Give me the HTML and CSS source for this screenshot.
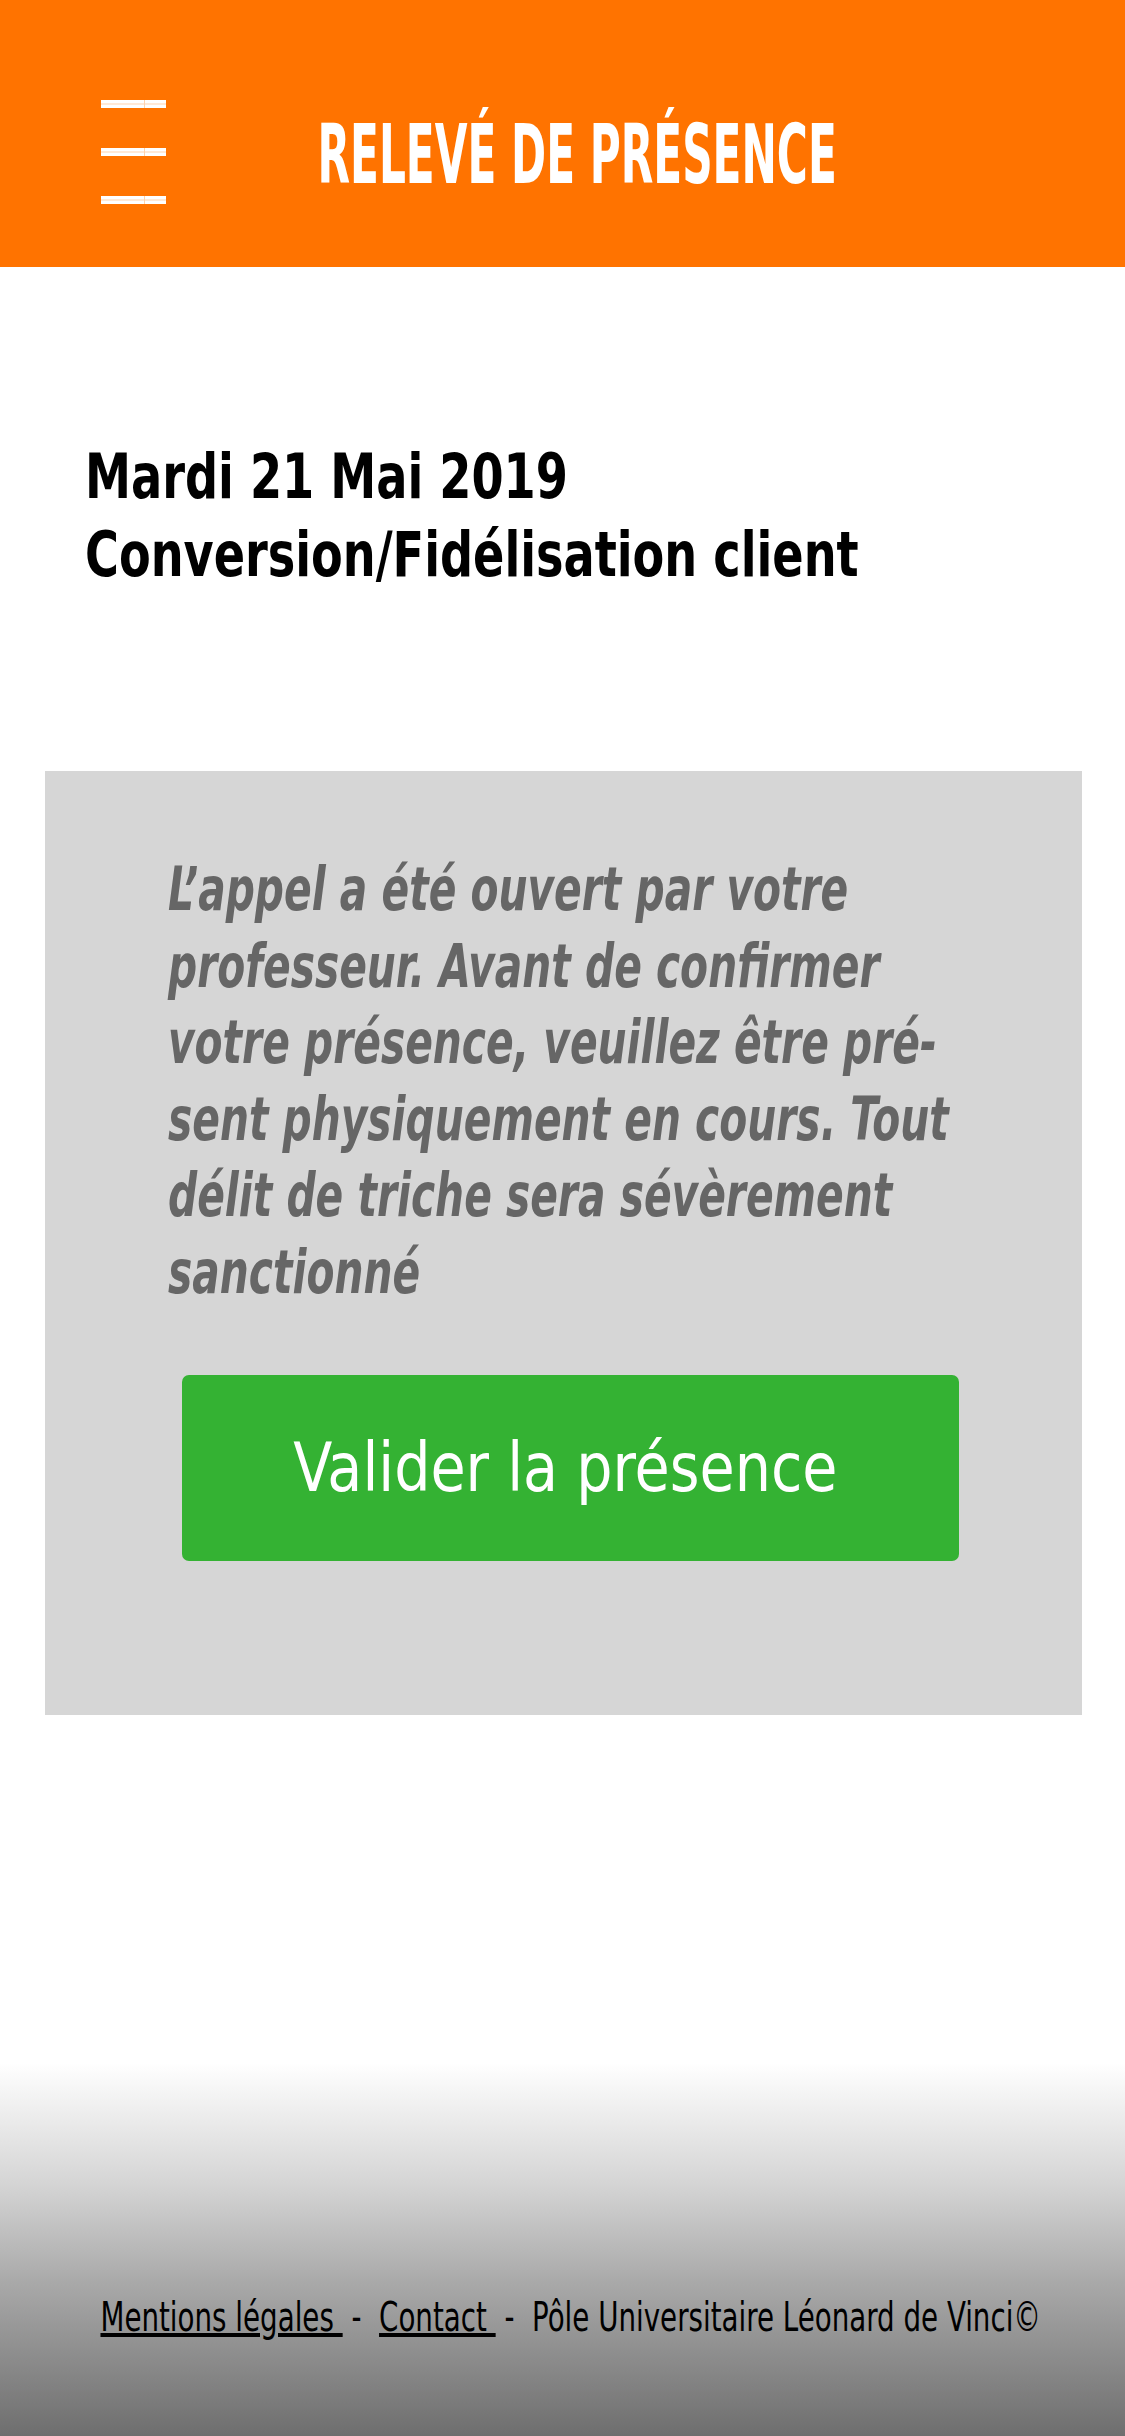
FILE: index.html
```html
<!DOCTYPE html>
<html lang="fr">
<head>
<meta charset="utf-8">
<title>Relevé de présence</title>
<link rel="stylesheet" href="styles.css">
</head>
<body>
<header class="topbar">
  <button class="burger" aria-label="Menu">
    <svg width="65" height="104" viewBox="0 0 65 104">
      <g fill="#ffffff">
        <rect x="0" y="0" width="65" height="8"/>
        <rect x="0" y="48" width="65" height="8"/>
        <rect x="0" y="96" width="65" height="8"/>
      </g>
      <g fill="#ffd3ad">
        <rect x="0" y="3.5" width="65" height="1"/>
        <rect x="0" y="51.5" width="65" height="1"/>
        <rect x="0" y="99.5" width="65" height="1"/>
        <rect x="43" y="0" width="1" height="8"/>
        <rect x="43" y="48" width="1" height="8"/>
        <rect x="43" y="96" width="1" height="8"/>
      </g>
    </svg>
  </button>
  <h1 class="title"><span class="squeeze">RELEVÉ DE PRÉSENCE</span></h1>
</header>

<main class="content">
  <section class="course">
    <p class="course-line"><span class="squeeze-l">Mardi 21 Mai 2019</span></p>
    <p class="course-line"><span class="squeeze-l">Conversion/Fidélisation client</span></p>
  </section>

  <section class="notice">
    <p class="notice-text">
      <span class="line">L’appel a été ouvert par votre</span>
      <span class="line">professeur. Avant de confirmer</span>
      <span class="line">votre présence, veuillez être pré-</span>
      <span class="line">sent physiquement en cours. Tout</span>
      <span class="line">délit de triche sera sévèrement</span>
      <span class="line">sanctionné</span>
    </p>
    <button class="validate"><span class="validate-label">Valider la présence</span></button>
  </section>
</main>

<footer class="footer">
  <p class="footer-text"><a href="#">Mentions légales </a>&nbsp;-&nbsp; <a href="#">Contact </a>&nbsp;-&nbsp; Pôle Universitaire Léonard de Vinci©</p>
</footer>
</body>
</html>
```

FILE: styles.css
```css
* { box-sizing: border-box; }
html, body { margin: 0; padding: 0; }
body {
  width: 1125px;
  min-height: 2436px;
  display: flex;
  flex-direction: column;
  background: #ffffff;
  overflow: hidden;
  font-family: "DejaVu Sans Condensed", "DejaVu Sans", sans-serif;
}

.topbar {
  height: 267px;
  background: #ff7300;
  display: flex;
  align-items: flex-start;
  padding: 100px 0 0 101px;
  overflow: hidden;
}
.burger {
  border: 0;
  padding: 0;
  margin: 0;
  background: none;
  width: 65px;
  height: 104px;
  display: block;
  flex-shrink: 0;
}
.burger svg { display: block; }

.title {
  flex: 1;
  min-width: 0;
  display: flex;
  justify-content: center;
  margin: 14px 0 0;
  padding-right: 136px;
  color: #ffffff;
  font-size: 82px;
  font-weight: 700;
  line-height: 1;
  white-space: nowrap;
}
.squeeze {
  display: inline-block;
  flex-shrink: 0;
  transform: scaleX(0.573);
  transform-origin: center;
}

.content { flex: 1; }

.course {
  padding: 171px 0 0 85px;
}
.course-line {
  margin: 0;
  font-size: 63px;
  line-height: 78px;
  font-weight: 700;
  color: #000;
  white-space: nowrap;
}
.squeeze-l {
  display: inline-block;
  transform: scaleX(0.815);
  transform-origin: left;
}

.notice {
  margin: 177px 43px 0 45px;
  background: #d6d6d6;
  padding: 80px 0 154px;
  display: flex;
  flex-direction: column;
}
.notice-text {
  margin: 0 0 0 123px;
  color: #666666;
  font-style: italic;
  font-size: 60px;
  line-height: 76.6px;
  font-weight: 700;
}
.notice-text .line {
  display: block;
  white-space: nowrap;
  transform: scaleX(0.755);
  transform-origin: left;
}
.validate {
  margin: 64px 0 0 137px;
  width: 777px;
  height: 186px;
  border: 0;
  border-radius: 7px;
  background: #34b233;
  color: #ffffff;
  font-family: "DejaVu Sans Condensed", "DejaVu Sans", sans-serif;
  font-size: 68px;
  padding: 0 10px 0 0;
}
.validate-label {
  display: inline-block;
  transform: scaleX(0.934);
  transform-origin: center;
}

.footer {
  height: 385px;
  background: linear-gradient(to bottom, #ffffff 0%, #ffffff 3%, #d4d4d4 35%, #a9a9a9 60%, #6e6e6e 100%);
  display: flex;
  justify-content: center;
  padding-left: 17px;
  overflow: hidden;
}
.footer-text {
  margin: 241px 0 0;
  font-size: 40px;
  line-height: 50px;
  color: #000;
  white-space: nowrap;
  transform: scaleX(0.77);
  transform-origin: center;
  flex-shrink: 0;
}
.footer-text a { color: #000; text-decoration: underline; }
```
